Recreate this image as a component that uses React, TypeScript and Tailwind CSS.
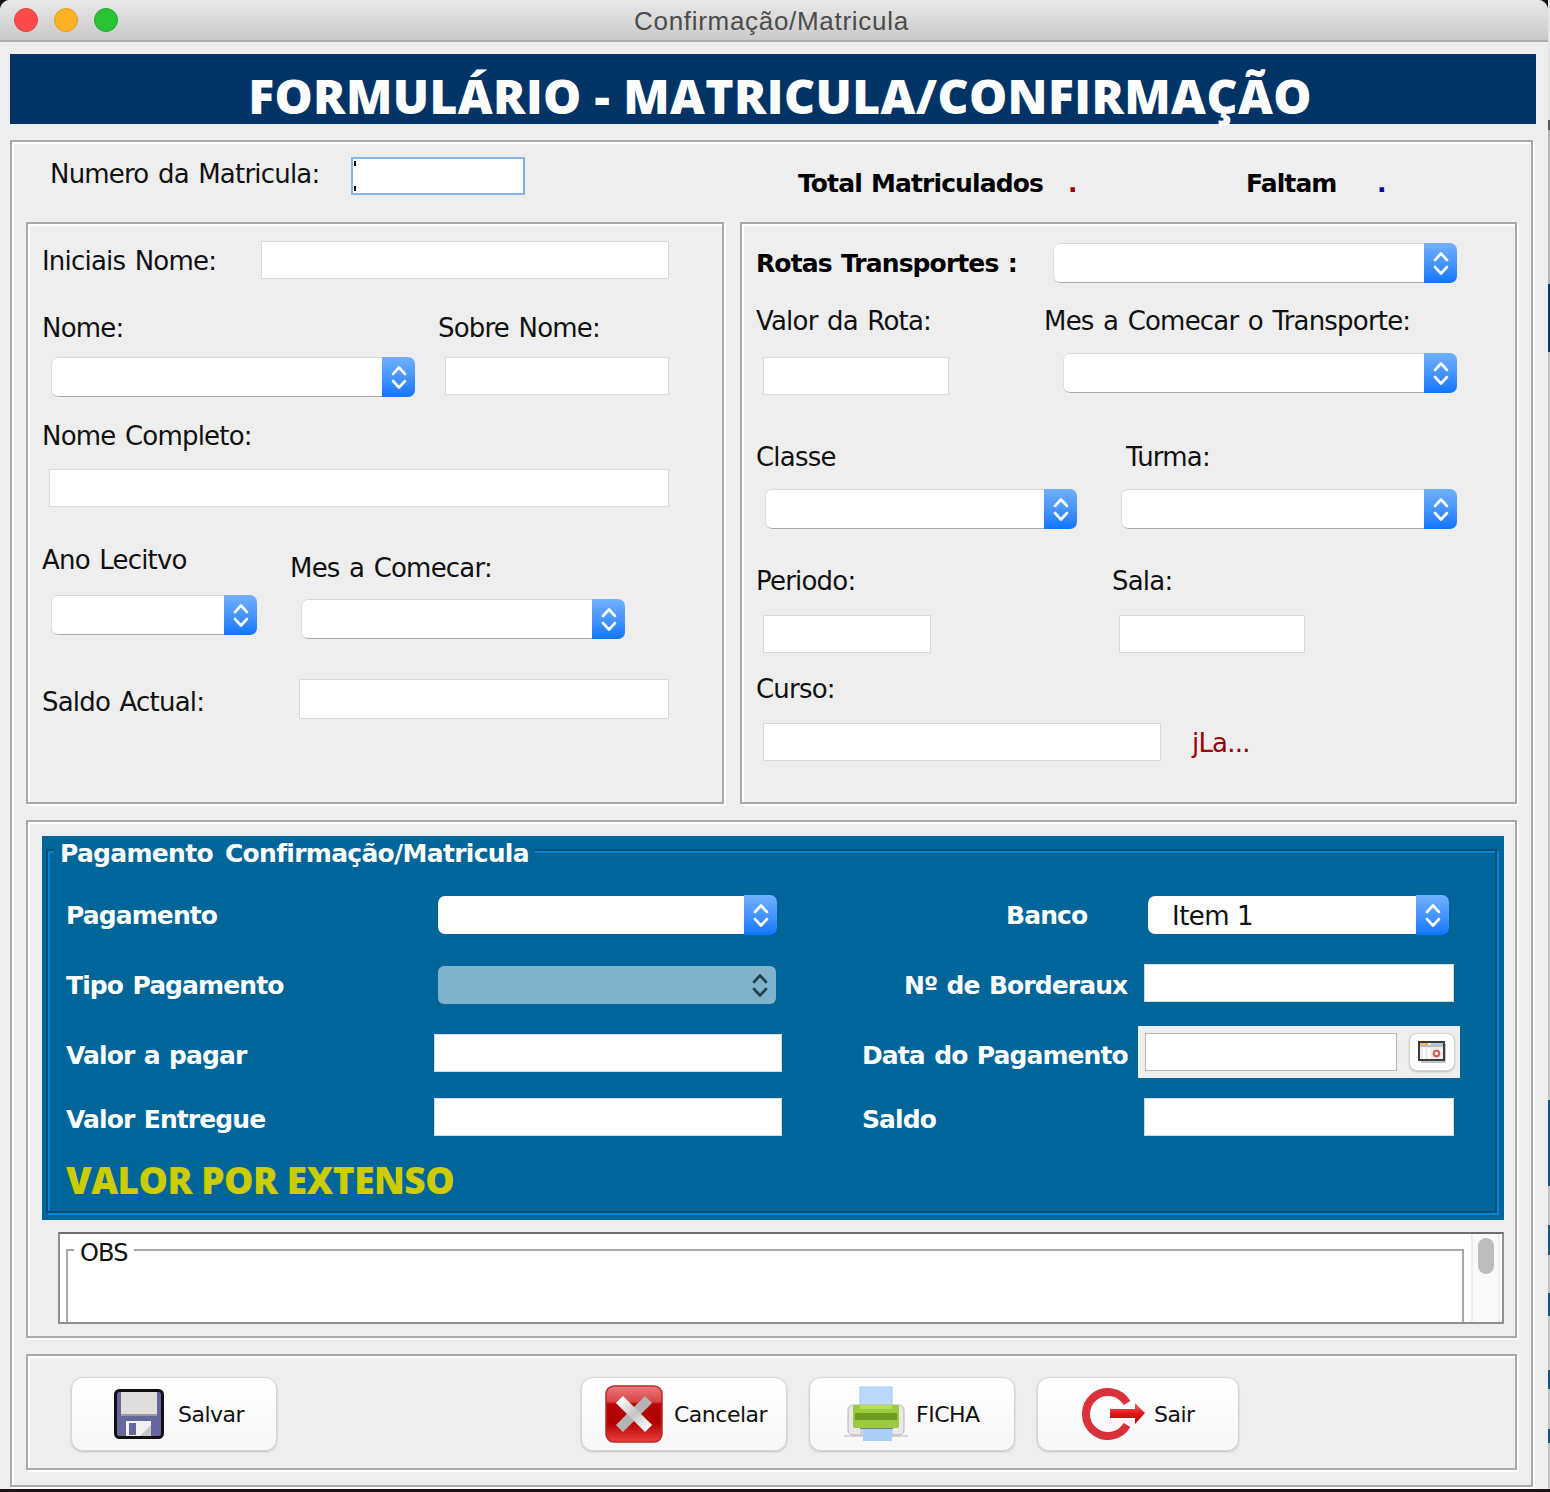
import React from 'react';

const Label: React.FC<{ className?: string; children: React.ReactNode }> = ({ className = '', children }) => (
    <div className={`h-[30px] leading-[32px] text-[26px] text-[#111] tracking-[-0.8px] [word-spacing:2px] whitespace-nowrap shrink-0 ${className}`}>{children}</div>
);

const Bold: React.FC<{ className?: string; children: React.ReactNode }> = ({ className = '', children }) => (
    <div className={`h-[30px] leading-[32px] text-[25px] font-bold tracking-[-0.9px] [word-spacing:1.5px] whitespace-nowrap shrink-0 ${className}`}>{children}</div>
);

const TextBox: React.FC<{ className?: string }> = ({ className = '' }) => (
    <div className={`h-[38px] bg-white border border-[#d9d9d9] shrink-0 ${className}`} />
);

const Chevrons: React.FC<{ color?: string }> = ({ color = '#fff' }) => (
    <svg width="16" height="28" viewBox="0 0 16 28" fill="none" stroke={color} strokeWidth="2.6" strokeLinecap="round" strokeLinejoin="round">
        <path d="M2 11 L8 4.5 L14 11" />
        <path d="M2 18 L8 24.5 L14 18" />
    </svg>
);

const Combo: React.FC<{ className?: string; text?: string; flat?: boolean }> = ({ className = '', text, flat }) => (
    <div className={`h-[40px] flex rounded-[7px] overflow-hidden shrink-0 ${className}`}>
        <div className={`flex-1 rounded-l-[7px] bg-white pl-[24px] leading-[40px] text-[26px] text-[#111] tracking-[-0.5px] ${flat ? 'my-[1px]' : 'shadow-[inset_0_1px_0_#d8d8d8,inset_1px_0_0_#dedede,inset_0_-1px_0_#a8a8a8]'}`}>{text}</div>
        <div className="w-[33px] flex items-center justify-center bg-gradient-to-b from-[#70b0ff] to-[#0a76ff]">
            <Chevrons />
        </div>
    </div>
);

const Etched: React.FC<{ className?: string; children?: React.ReactNode }> = ({ className = '', children }) => (
    <div className={`border-2 border-[#a8a8a8] shadow-[inset_2px_2px_0_#fff,2px_2px_0_#fff] shrink-0 ${className}`}>{children}</div>
);

const FloppyIcon = () => (
    <svg width="50" height="50" viewBox="0 0 50 50">
        <rect x="1.5" y="1.5" width="47" height="47" rx="4" fill="#64689c" stroke="#111" strokeWidth="3" />
        <rect x="7" y="3" width="36" height="24" fill="#dedede" />
        <rect x="7" y="25" width="36" height="2" fill="#9a9a9a" />
        <rect x="12" y="32" width="25" height="15" fill="#f2f2f2" />
        <path d="M26 47 L37 36 V47 Z" fill="#c8c8c8" />
        <rect x="15" y="34" width="7" height="12" fill="#64689c" />
    </svg>
);

const CancelIcon = () => (
    <svg width="60" height="60" viewBox="0 0 60 60">
        <defs>
            <linearGradient id="cancelFill" x1="0" y1="0" x2="0" y2="1">
                <stop offset="0" stopColor="#ee7c7c" />
                <stop offset="0.28" stopColor="#d84444" />
                <stop offset="0.32" stopColor="#b80505" />
                <stop offset="0.65" stopColor="#b00000" />
                <stop offset="1" stopColor="#ee4040" />
            </linearGradient>
            <linearGradient id="cancelCross" gradientUnits="userSpaceOnUse" x1="15" y1="15" x2="45" y2="45">
                <stop offset="0" stopColor="#ffffff" />
                <stop offset="0.5" stopColor="#c4c4c4" />
                <stop offset="1" stopColor="#ffffff" />
            </linearGradient>
        </defs>
        <rect x="2" y="2" width="56" height="56" rx="8" fill="url(#cancelFill)" stroke="#b52a2a" strokeWidth="1.5" />
        <path d="M41 19 L19 41" stroke="#b4b4b4" strokeWidth="10" strokeLinecap="square" />
        <path d="M19 19 L41 41" stroke="url(#cancelCross)" strokeWidth="10" strokeLinecap="square" />
    </svg>
);

const PrinterIcon = () => (
    <svg width="64" height="56" viewBox="0 0 64 56">
        <rect x="0" y="49" width="64" height="2" fill="#d8d8d8" />
        <rect x="16" y="1" width="32" height="21" fill="#bcd8fa" stroke="#a4c8f0" />
        <rect x="4" y="19" width="56" height="30" rx="5" fill="#e8e8e8" stroke="#b4b4b4" />
        <rect x="9" y="19" width="46" height="23" rx="2" fill="#9ccb3e" />
        <rect x="11" y="27" width="42" height="7" fill="#6f9c20" />
        <rect x="16" y="19" width="32" height="4" fill="#b8de5c" />
        <rect x="16" y="42" width="33" height="6" fill="#d4d4d4" />
        <rect x="16" y="42" width="33" height="1" fill="#808080" />
        <rect x="19" y="43" width="29" height="12" fill="#a9cff6" />
    </svg>
);

const ExitIcon = () => (
    <svg width="65" height="52" viewBox="0 0 65 52">
        <defs>
            <linearGradient id="exitArrow" x1="0" y1="0" x2="0" y2="1">
                <stop offset="0" stopColor="#f07070" />
                <stop offset="0.5" stopColor="#e01818" />
                <stop offset="1" stopColor="#b80000" />
            </linearGradient>
        </defs>
        <path d="M46 15 A22 22 0 1 0 46 37" fill="none" stroke="#da3039" strokeWidth="8" />
        <path d="M29 21 H54 V15 L64 25 L54 36 V30 H29 Z" fill="url(#exitArrow)" />
    </svg>
);

const CalendarIcon = () => (
    <svg width="28" height="22" viewBox="0 0 28 22">
        <rect x="3" y="3" width="25" height="19" fill="#c4c4c4" />
        <rect x="1" y="1" width="25" height="18" fill="#ededed" stroke="#3c3c3c" strokeWidth="2" />
        <rect x="2" y="2" width="8" height="2" fill="#f4b63f" />
        <rect x="13" y="2" width="12" height="2" fill="#a9c9ee" />
        <rect x="2" y="4" width="23" height="2" fill="#bdbdbd" />
        <rect x="5" y="7" width="2" height="11" fill="#fff" />
        <rect x="10" y="7" width="2" height="11" fill="#fff" />
        <circle cx="18.5" cy="12.5" r="2.8" fill="#fff" stroke="#e25555" strokeWidth="2" />
    </svg>
);

const ActionButton: React.FC<{ className: string; icon: React.ReactNode; label: string; labelClass: string }> = ({ className, icon, label, labelClass }) => (
    <div className={`h-[74px] flex items-center rounded-[12px] bg-gradient-to-b from-white to-[#f7f7f7] border border-[#d4d4d4] shadow-[0_1px_2px_#bbb] shrink-0 ${className}`}>
        {icon}
        <span className={`text-[22px] text-[#111] tracking-[-0.5px] ${labelClass}`}>{label}</span>
    </div>
);

const App: React.FC = () => {
    return (
        <div className="w-[1550px] h-[1492px] bg-[#1a1212] overflow-hidden flex font-['DejaVu_Sans',sans-serif]">
            <div className="w-[1548px] h-[1489px] bg-[#eeeeee] rounded-t-[10px] overflow-hidden shrink-0">
                {/* Title bar */}
                <div className="h-[42px] flex items-center bg-gradient-to-b from-[#e9e9e9] to-[#c9c9c9] border-b-2 border-[#adadad] pl-[14px]">
                    <div className="w-6 h-6 rounded-full bg-[#fc4a4a] border border-[#e33e3c]" />
                    <div className="w-6 h-6 rounded-full bg-[#fdb124] border border-[#e09e1c] ml-[16px]" />
                    <div className="w-6 h-6 rounded-full bg-[#2ac333] border border-[#1fa72a] ml-[16px]" />
                    <div className="ml-[516px] mt-[2px] text-[26px] tracking-[0.7px] text-[#4c4c4c] font-['Liberation_Sans',sans-serif]">Confirmação/Matricula</div>
                </div>

                {/* Header */}
                <div className="ml-[10px] mt-[12px] w-[1526px] h-[70px] bg-[#003366] text-white text-center pl-[14px] pt-[7px]">
                    <span className="text-[48px] leading-[70px] font-extrabold tracking-[0.4px] font-['Open_Sans',sans-serif]">FORMULÁRIO - MATRICULA/CONFIRMAÇÃO</span>
                </div>

                {/* Outer panel */}
                <Etched className="ml-[10px] mt-[16px] w-[1523px] h-[1347px] px-[14px]">
                    <div className="h-[80px] flex items-start pl-[24px]">
                        <Label className="w-[301px] mt-[16px]">Numero da Matricula:</Label>
                        <div className="relative w-[174px] h-[38px] mt-[15px] bg-white border-2 border-[#82b4ea] shrink-0">
                            <div className="absolute left-[1px] top-[2px] w-[2px] h-[5px] bg-black" />
                            <div className="absolute left-[1px] bottom-[2px] w-[2px] h-[5px] bg-black" />
                        </div>
                        <Bold className="ml-[273px] mt-[26px] w-[270px]">Total Matriculados</Bold>
                        <Bold className="mt-[26px] w-[178px] text-[#990000]">.</Bold>
                        <Bold className="mt-[26px] w-[131px]">Faltam</Bold>
                        <Bold className="mt-[26px] text-[#000099]">.</Bold>
                    </div>

                    <div className="flex gap-[16px]">
                        {/* Left panel */}
                        <Etched className="w-[698px] h-[582px] pl-[14px] pt-[17px]">
                            <div className="flex items-center h-[38px]">
                                <Label className="w-[219px]">Iniciais Nome:</Label>
                                <TextBox className="w-[408px]" />
                            </div>
                            <div className="flex mt-[33px]">
                                <Label className="w-[396px]">Nome:</Label>
                                <Label>Sobre Nome:</Label>
                            </div>
                            <div className="flex mt-[15px]">
                                <Combo className="ml-[9px] w-[364px]" />
                                <TextBox className="ml-[30px] w-[224px]" />
                            </div>
                            <Label className="mt-[23px]">Nome Completo:</Label>
                            <TextBox className="mt-[19px] ml-[7px] w-[620px]" />
                            <div className="flex mt-[37px]">
                                <div className="w-[248px]">
                                    <Label>Ano Lecitvo</Label>
                                    <Combo className="mt-[21px] ml-[9px] w-[206px]" />
                                </div>
                                <div className="pt-[8px]">
                                    <Label>Mes a Comecar:</Label>
                                    <Combo className="mt-[17px] ml-[11px] w-[324px]" />
                                </div>
                            </div>
                            <div className="flex items-center h-[40px] mt-[40px]">
                                <Label className="w-[257px] mt-[3px]">Saldo Actual:</Label>
                                <TextBox className="w-[370px] h-[40px]" />
                            </div>
                        </Etched>

                        {/* Right panel */}
                        <Etched className="w-[777px] h-[582px] pl-[14px] pt-[19px]">
                            <div className="flex items-center h-[40px]">
                                <Bold className="w-[297px]">Rotas Transportes :</Bold>
                                <Combo className="w-[404px]" />
                            </div>
                            <div className="flex mt-[22px]">
                                <Label className="w-[288px]">Valor da Rota:</Label>
                                <Label>Mes a Comecar o Transporte:</Label>
                            </div>
                            <div className="flex items-start mt-[18px]">
                                <TextBox className="ml-[7px] mt-[4px] w-[186px]" />
                                <Combo className="ml-[114px] w-[394px]" />
                            </div>
                            <div className="flex mt-[46px]">
                                <Label className="w-[370px]">Classe</Label>
                                <Label>Turma:</Label>
                            </div>
                            <div className="flex mt-[18px]">
                                <Combo className="ml-[9px] w-[312px]" />
                                <Combo className="ml-[44px] w-[336px]" />
                            </div>
                            <div className="flex mt-[36px]">
                                <Label className="w-[356px]">Periodo:</Label>
                                <Label>Sala:</Label>
                            </div>
                            <div className="flex mt-[20px]">
                                <TextBox className="ml-[7px] w-[168px]" />
                                <TextBox className="ml-[188px] w-[186px]" />
                            </div>
                            <Label className="mt-[20px]">Curso:</Label>
                            <div className="flex items-center mt-[20px]">
                                <TextBox className="ml-[7px] w-[398px]" />
                                <Label className="ml-[31px] !text-[#990000]">jLa...</Label>
                            </div>
                        </Etched>
                    </div>

                    {/* Payment panel */}
                    <Etched className="mt-[16px] w-[1491px] h-[518px] pl-[14px] pt-[14px]">
                        <div className="w-[1462px] h-[384px] bg-[#006699] pt-[13px] pl-[4px] text-white">
                            <div className="relative w-[1451px] h-[364px] border-2 border-[#004f7a] shadow-[inset_2px_2px_0_#0088d6,2px_2px_0_#0088d6] pl-[18px] pt-[44px]">
                                <Bold className="absolute left-[6px] -top-[13px] px-[6px] bg-[#006699] !tracking-[-0.7px] ![word-spacing:4px]">Pagamento Confirmação/Matricula</Bold>
                                <div className="flex items-center h-[40px]">
                                    <Bold className="w-[372px]">Pagamento</Bold>
                                    <Combo flat className="w-[339px]" />
                                    <Bold className="ml-[229px] w-[142px]">Banco</Bold>
                                    <Combo flat className="w-[301px]" text="Item 1" />
                                </div>
                                <div className="flex items-center h-[40px] mt-[29px]">
                                    <Bold className="w-[372px] mt-[2px]">Tipo Pagamento</Bold>
                                    <div className="w-[338px] h-[38px] mt-[2px] flex items-center justify-end rounded-[6px] bg-[#80b2cc] pr-[8px] shrink-0">
                                        <Chevrons color="#1f3f52" />
                                    </div>
                                    <Bold className="ml-[128px] w-[240px] mt-[2px]">Nº de Borderaux</Bold>
                                    <TextBox className="w-[310px] self-start" />
                                </div>
                                <div className="flex items-center h-[52px] mt-[22px]">
                                    <Bold className="w-[368px] mt-[6px]">Valor a pagar</Bold>
                                    <TextBox className="w-[348px] mt-[2px]" />
                                    <Bold className="ml-[80px] w-[276px] mt-[6px]">Data do Pagamento</Bold>
                                    <div className="w-[322px] h-[52px] flex items-center bg-[#eeeeee] pl-[7px] shrink-0">
                                        <div className="w-[252px] h-[38px] bg-white border border-[#b5b5b5]" />
                                        <div className="ml-[12px] w-[46px] h-[38px] flex items-center justify-center bg-white rounded-[8px] border border-[#d4d4d4] shadow-[0_1px_2px_#bbb]">
                                            <CalendarIcon />
                                        </div>
                                    </div>
                                </div>
                                <div className="flex items-center h-[38px] mt-[20px]">
                                    <Bold className="w-[368px] mt-[4px]">Valor Entregue</Bold>
                                    <TextBox className="w-[348px]" />
                                    <Bold className="ml-[80px] w-[282px] mt-[4px]">Saldo</Bold>
                                    <TextBox className="w-[310px]" />
                                </div>
                                <div className="mt-[21px] h-[46px] leading-[46px] text-[37px] font-extrabold text-[#cccc00] tracking-[-0.5px] font-['Open_Sans',sans-serif]">VALOR POR EXTENSO</div>
                            </div>
                        </div>

                        {/* OBS */}
                        <div className="mt-[12px] ml-[16px] w-[1446px] h-[92px] flex bg-white border-2 border-[#909090] border-t-[#6e6e6e] pr-[2px]">
                            <div className="relative ml-[6px] mt-[15px] w-[1398px] border-l-2 border-t-2 border-r-2 border-[#a8a8a8]">
                                <div className="absolute left-[6px] -top-[12px] px-[6px] bg-white h-[28px] leading-[28px] text-[24px] text-[#111] tracking-[-0.8px]">OBS</div>
                            </div>
                            <div className="ml-[7px] w-[29px] pt-[4px] bg-[#fafafa] border-l-2 border-r-2 border-[#ececec]">
                                <div className="ml-[5px] w-[16px] h-[36px] rounded-full bg-[#bdbdbd]" />
                            </div>
                        </div>
                    </Etched>

                    {/* Buttons */}
                    <Etched className="mt-[16px] w-[1491px] h-[116px] pt-[21px] flex items-start">
                        <ActionButton className="ml-[43px] w-[206px] pl-[42px]" icon={<FloppyIcon />} label="Salvar" labelClass="ml-[14px]" />
                        <ActionButton className="ml-[304px] w-[206px] pl-[22px]" icon={<CancelIcon />} label="Cancelar" labelClass="ml-[10px]" />
                        <ActionButton className="ml-[22px] w-[206px] pl-[34px]" icon={<PrinterIcon />} label="FICHA" labelClass="ml-[8px]" />
                        <ActionButton className="ml-[22px] w-[202px] pl-[43px]" icon={<ExitIcon />} label="Sair" labelClass="ml-[8px]" />
                    </Etched>
                </Etched>
            </div>

            {/* Desktop showing past the window edge */}
            <div className="w-[2px] h-[1489px] flex flex-col bg-[#c4c4c4]">
                <div className="h-[120px] shrink-0 bg-[#e4e4e4]" />
                <div className="h-[10px] shrink-0 bg-[#555555]" />
                <div className="h-[154px] shrink-0 bg-[#b4b4b4]" />
                <div className="h-[68px] shrink-0 bg-[#0a3a66]" />
                <div className="h-[748px] shrink-0" />
                <div className="h-[86px] shrink-0 bg-[#0a5a86]" />
                <div className="h-[39px] shrink-0" />
                <div className="h-[30px] shrink-0 bg-[#0a5a86]" />
                <div className="h-[38px] shrink-0" />
                <div className="h-[23px] shrink-0 bg-[#0a5a86]" />
                <div className="h-[54px] shrink-0" />
                <div className="h-[19px] shrink-0 bg-[#0a5a86]" />
                <div className="h-[40px] shrink-0" />
                <div className="h-[14px] shrink-0 bg-[#0a5a86]" />
            </div>
        </div>
    );
};

export default App;
